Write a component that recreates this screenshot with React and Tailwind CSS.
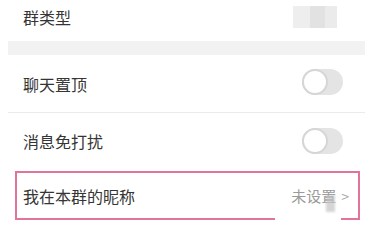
import React from "react";

function Toggle() {
  return (
    <div className="relative w-[41px] h-[26px] rounded-full bg-[#e4e4e4]">
      <div className="absolute left-0 top-0 w-[26px] h-[26px] rounded-full bg-white border-[2px] border-[#d6d6d6]" />
    </div>
  );
}

export default function App() {
  const font = { fontFamily: '"Noto Sans CJK SC", "Noto Sans", sans-serif' };
  return (
    <div className="w-[369px] h-[241px] overflow-hidden bg-white relative" style={font}>
      <div className="h-[41px] flex items-center justify-between pl-[23px] pr-[32px] pb-[8px]">
        <span className="text-[16px] leading-[20px] text-[#353535]">群类型</span>
        <div className="flex w-[44px] h-[22px]">
          <div className="w-[17px] h-full bg-[#eeeeee]" />
          <div className="w-[15px] h-full bg-[#e2e2e2]" />
          <div className="w-[12px] h-full bg-[#ebebeb]" />
        </div>
      </div>
      <div className="h-[14px] ml-[8px] mr-[4px] bg-[#f2f2f2]" />
      <div className="h-[57px] flex items-center justify-between pl-[23px] pr-[26px]">
        <span className="text-[16px] leading-[20px] text-[#353535]">聊天置顶</span>
        <div className="-mt-[4px]"><Toggle /></div>
      </div>
      <div className="h-px ml-[8px] mr-[4px] bg-[#ebebeb]" />
      <div className="h-[56px] flex items-center justify-between pl-[23px] pr-[26px]">
        <span className="text-[16px] leading-[20px] text-[#353535]">消息免打扰</span>
        <div className="-mt-[1px]"><Toggle /></div>
      </div>
      <div className="pt-[2px] pl-[15px] pr-[9px]">
        <div className="relative h-[49px] border-[2px] border-[#e2739a] flex items-center justify-between pl-[6px] pr-[9px]">
          <span className="text-[16px] leading-[20px] text-[#353535]">我在本群的昵称</span>
          <div className="flex items-center gap-[5px]">
            <span className="text-[15px] leading-[20px] text-[#9a9a9a]">未设置</span>
            <span className="text-[14px] leading-[20px] text-[#a8a8a8]">&gt;</span>
          </div>
          <div className="absolute left-[309px] top-[22px] w-[9px] h-[17px] bg-[#c4c4c4] opacity-70 blur-[1px]" />
          <div className="absolute left-[258px] -bottom-[3px] w-[66px] h-[5px] bg-white" />
        </div>
      </div>
      <div className="pt-[16px] pl-[23px]">
        <span className="text-[16px] leading-[20px] text-[#353535]">设置聊天背景</span>
      </div>
    </div>
  );
}
